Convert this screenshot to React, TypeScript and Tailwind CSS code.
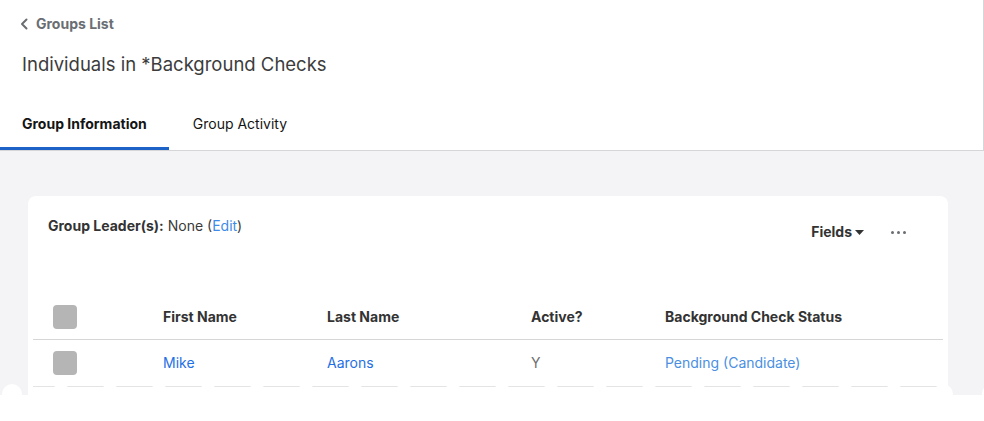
import React from "react";

const font = { fontFamily: "Inter, 'Noto Sans', sans-serif" };

function Checkbox() {
  return <div className="h-[24px] w-[24px] rounded-[4px] bg-[#b5b5b5]" />;
}

function TornEdge() {
  const bumps = Array.from({ length: 21 }, (_, i) => 12 + i * 49);
  return (
    <svg
      className="pointer-events-none absolute bottom-0 left-0"
      width="984"
      height="40"
      viewBox="0 0 984 40"
    >
      <rect x="0" y="14" width="984" height="26" fill="#ffffff" />
      {bumps.map((cx) => (
        <circle key={cx} cx={cx} cy="13" r="10" fill="#ffffff" />
      ))}
    </svg>
  );
}

export default function App() {
  return (
    <div className="relative h-[421px] w-[984px] overflow-hidden bg-[#f4f4f6]" style={font}>
      {/* page header */}
      <div className="border-b border-r border-[#d6d6d8] bg-white pt-[15px]">
        <div className="flex h-[18px] items-center gap-[8px] px-[20px] text-[14px] font-bold leading-[18px] text-[#6a6e73]">
          <svg width="8" height="12" viewBox="0 0 8 12" fill="none">
            <path d="M6.5 1.5 2 6l4.5 4.5" stroke="#6a6e73" strokeWidth="2" strokeLinecap="round" strokeLinejoin="round" />
          </svg>
          <span>Groups List</span>
        </div>
        <h1 className="mt-[17px] px-[22px] text-[18.5px] font-normal leading-[28px] text-[#3c3c3c]">
          Individuals in *Background Checks
        </h1>
        <div className="mt-[22px] flex h-[50px] text-[14px] leading-[18px]">
          <div className="flex items-center border-b-[3px] border-[#1d63c7] px-[22px] pt-[1px] font-bold text-[#151515]">
            Group Information
          </div>
          <div className="flex items-center px-[24px] pb-[2px] text-[#151515]">Group Activity</div>
        </div>
      </div>

      {/* content */}
      <div className="px-[28px] pt-[45px]">
        <div className="w-[920px] rounded-[8px] bg-white px-[5px]">
          <div className="flex h-[97px] items-start justify-between pl-[15px] pr-[37px] pt-[21px] text-[14px] leading-[18px]">
            <div className="text-[#3a3a3a]">
              <span className="font-bold text-[#333333]">Group Leader(s):</span> None (
              <span className="text-[#3d8be6]">Edit</span>)
            </div>
            <div className="mt-[6px] flex items-center gap-[27px]">
              <div className="flex items-center gap-[3px] font-bold text-[#333333]">
                Fields
                <svg width="9" height="5" viewBox="0 0 9 5">
                  <path d="M0 0h9L4.5 5z" fill="#333333" />
                </svg>
              </div>
              <div className="flex items-center gap-[3px]">
                <span className="h-[3px] w-[3px] rounded-full bg-[#6a6e73]" />
                <span className="h-[3px] w-[3px] rounded-full bg-[#6a6e73]" />
                <span className="h-[3px] w-[3px] rounded-full bg-[#6a6e73]" />
              </div>
            </div>
          </div>

          <div className="text-[14px] leading-[18px]">
            <div className="grid h-[47px] grid-cols-[130px_164px_204px_134px_1fr] items-center border-b border-[#d6d6d6] pt-[1px] font-bold text-[#333333]">
              <div className="pl-[20px]">
                <Checkbox />
              </div>
              <div>First Name</div>
              <div>Last Name</div>
              <div>Active?</div>
              <div>Background Check Status</div>
            </div>
            <div className="grid h-[47px] grid-cols-[130px_164px_204px_134px_1fr] items-center border-b border-[#e4e4e4]">
              <div className="pl-[20px]">
                <Checkbox />
              </div>
              <div className="text-[#1f6fe5]">Mike</div>
              <div className="text-[#1f6fe5]">Aarons</div>
              <div className="text-[#6f6f6f]">Y</div>
              <div className="text-[#4a8fe2]">Pending (Candidate)</div>
            </div>
            <div className="h-[60px]" />
          </div>
        </div>
      </div>

      <TornEdge />
    </div>
  );
}
